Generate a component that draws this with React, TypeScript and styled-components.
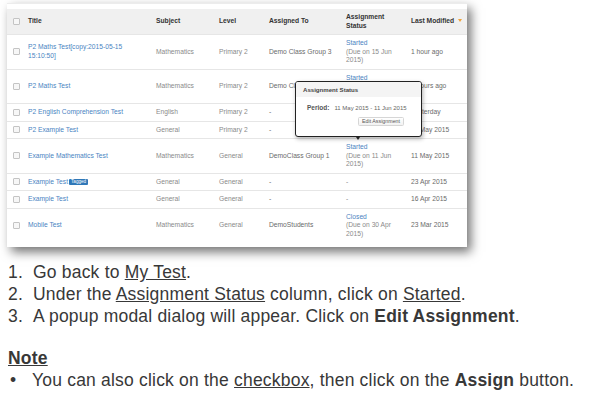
import React from 'react';
import styled, { createGlobalStyle } from 'styled-components';

interface Row {
  title: string;
  tagged?: boolean;
  subject: string;
  level: string;
  assigned: string;
  status?: string;
  due?: string;
  modified: string;
}

const rows: Row[] = [
  { title: 'P2 Maths Test[copy:2015-05-15 15:10:50]', subject: 'Mathematics', level: 'Primary 2', assigned: 'Demo Class Group 3', status: 'Started', due: '(Due on 15 Jun 2015)', modified: '1 hour ago' },
  { title: 'P2 Maths Test', subject: 'Mathematics', level: 'Primary 2', assigned: 'Demo Class Group 2', status: 'Started', due: '(Due on 11 Jun 2015)', modified: '2 hours ago' },
  { title: 'P2 English Comprehension Test', subject: 'English', level: 'Primary 2', assigned: '-', modified: 'Yesterday' },
  { title: 'P2 Example Test', subject: 'General', level: 'Primary 2', assigned: '-', modified: '11 May 2015' },
  { title: 'Example Mathematics Test', subject: 'Mathematics', level: 'General', assigned: 'DemoClass Group 1', status: 'Started', due: '(Due on 11 Jun 2015)', modified: '11 May 2015' },
  { title: 'Example Test', tagged: true, subject: 'General', level: 'General', assigned: '-', modified: '23 Apr 2015' },
  { title: 'Example Test', subject: 'General', level: 'General', assigned: '-', modified: '16 Apr 2015' },
  { title: 'Mobile Test', subject: 'Mathematics', level: 'General', assigned: 'DemoStudents', status: 'Closed', due: '(Due on 30 Apr 2015)', modified: '23 Mar 2015' },
];

const GlobalStyle = createGlobalStyle`
  body {
    margin: 0;
    background: #fff;
    font-family: 'Liberation Sans', Arial, sans-serif;
  }
`;

const Page = styled.div`
  width: 594px;
  height: 400px;
  overflow: hidden;
  padding: 3px 0 0 7px;
  box-sizing: border-box;
`;

const Panel = styled.div`
  position: relative;
  width: 460px;
  background: #fff;
  padding: 5px 0 5px;
  border-top: 1px solid #ececec;
  box-shadow: 4px 5px 10px rgba(0, 0, 0, 0.55);
`;

const Table = styled.table`
  width: 100%;
  border-collapse: collapse;
  table-layout: fixed;
  font-size: 6.7px;
  line-height: 8.4px;
`;

const Th = styled.th<{ $w: number }>`
  box-sizing: border-box;
  width: ${p => p.$w}px;
  background: #f0f0f0;
  color: #333;
  font-weight: bold;
  text-align: left;
  padding: 4.2px 4px;
  vertical-align: middle;
`;

const Td = styled.td<{ $dark?: boolean; $pr?: number }>`
  padding: 4.1px ${p => p.$pr ?? 4}px 4.1px 4px;
  border-top: 1px solid #e6e6e6;
  color: ${p => (p.$dark ? '#6a6a6a' : '#8a8a8a')};
  vertical-align: middle;
`;

const Check = styled.span`
  display: block;
  width: 5px;
  height: 5px;
  margin-left: 2px;
  border: 1px solid #c4c4c4;
  border-radius: 1px;
  background: #f7f7f7;
`;

const Link = styled.span`
  color: #4a84c2;
`;

const TitleText = styled.span`
  display: block;
  color: #4a84c2;
`;

const Tag = styled.span`
  display: inline-block;
  margin-left: 1px;
  padding: 0 2px;
  background: #2f78b8;
  color: #fff;
  font-size: 4.6px;
  line-height: 6px;
  border-radius: 1px;
  vertical-align: 1px;
`;

const SortArrow = styled.span`
  display: inline-block;
  margin-left: 4px;
  width: 0;
  height: 0;
  border-left: 2.5px solid transparent;
  border-right: 2.5px solid transparent;
  border-top: 3px solid #f0a33a;
  vertical-align: 1px;
`;

const Popup = styled.div`
  position: absolute;
  left: 288px;
  top: 77px;
  width: 125px;
  height: 54px;
  background: #fff;
  border: 1.5px solid #222;
  border-radius: 3px;
  box-shadow: 1px 2px 4px rgba(0, 0, 0, 0.3);
  &::after {
    content: '';
    position: absolute;
    left: 60px;
    bottom: -4px;
    border-left: 2.5px solid transparent;
    border-right: 2.5px solid transparent;
    border-top: 3px solid #222;
  }
`;

const PopupHead = styled.div`
  height: 15px;
  background: #f4f4f4;
  border-radius: 2px 2px 0 0;
  padding: 0 7px;
  font-size: 6.1px;
  font-weight: bold;
  color: #444;
  line-height: 15px;
`;

const PopupBody = styled.div`
  padding: 7px 0 0 11px;
  display: flex;
  flex-direction: column;
  gap: 6px;
`;

const Period = styled.div`
  display: flex;
  align-items: baseline;
  gap: 5px;
  white-space: nowrap;
  font-size: 6px;
  color: #666;
  b {
    font-size: 6.5px;
    color: #555;
  }
`;

const EditButton = styled.span`
  align-self: flex-end;
  margin-right: 17px;
  padding: 0 3px;
  border: 1px solid #d6d6d6;
  border-radius: 1.5px;
  background: linear-gradient(#fff, #f2f2f2);
  font-size: 5.3px;
  line-height: 7px;
  color: #555;
`;

const Steps = styled.div`
  margin-top: 14px;
  padding-left: 1px;
  font-size: 17.5px;
  line-height: 22px;
  letter-spacing: 0.2px;
  color: #383838;
`;

const Step = styled.div`
  display: flex;
`;

const Num = styled.span`
  width: 25px;
  flex: none;
`;

const U = styled.span`
  text-decoration: underline;
`;

const Note = styled.div`
  margin-top: 20px;
  font-weight: bold;
  text-decoration: underline;
`;

const Bullet = styled.span`
  width: 22px;
  flex: none;
  padding-left: 2px;
`;

const cols = [17, 128, 63, 50, 77, 65, 60];

export default function App() {
  return (
    <Page>
      <GlobalStyle />
      <Panel>
        <Table>
          <thead>
            <tr>
              <Th $w={cols[0]}><Check /></Th>
              <Th $w={cols[1]}>Title</Th>
              <Th $w={cols[2]}>Subject</Th>
              <Th $w={cols[3]}>Level</Th>
              <Th $w={cols[4]}>Assigned To</Th>
              <Th $w={cols[5]}>Assignment<br />Status</Th>
              <Th $w={cols[6]}>Last Modified<SortArrow /></Th>
            </tr>
          </thead>
          <tbody>
            {rows.map((r, i) => (
              <tr key={i}>
                <Td><Check /></Td>
                <Td $pr={8}>
                  <TitleText>
                    {r.title}
                    {r.tagged && <Tag>Tagged</Tag>}
                  </TitleText>
                </Td>
                <Td>{r.subject}</Td>
                <Td>{r.level}</Td>
                <Td $dark>{r.assigned}</Td>
                <Td $pr={8}>
                  {r.status ? (
                    <>
                      <Link>{r.status}</Link>
                      <br />
                      {r.due}
                    </>
                  ) : '-'}
                </Td>
                <Td $dark>{r.modified}</Td>
              </tr>
            ))}
          </tbody>
        </Table>
        <Popup>
          <PopupHead>Assignment Status</PopupHead>
          <PopupBody>
            <Period>
              <b>Period:</b>
              <span>11 May 2015 - 11 Jun 2015</span>
            </Period>
            <EditButton>Edit Assignment</EditButton>
          </PopupBody>
        </Popup>
      </Panel>
      <Steps>
        <Step><Num>1.</Num><span>Go back to <U>My Test</U>.</span></Step>
        <Step><Num>2.</Num><span>Under the <U>Assignment Status</U> column, click on <U>Started</U>.</span></Step>
        <Step><Num>3.</Num><span>A popup modal dialog will appear. Click on <b>Edit Assignment</b>.</span></Step>
        <Note>Note</Note>
        <Step><Bullet>•</Bullet><span>You can also click on the <U>checkbox</U>, then click on the <b>Assign</b> button.</span></Step>
      </Steps>
    </Page>
  );
}
